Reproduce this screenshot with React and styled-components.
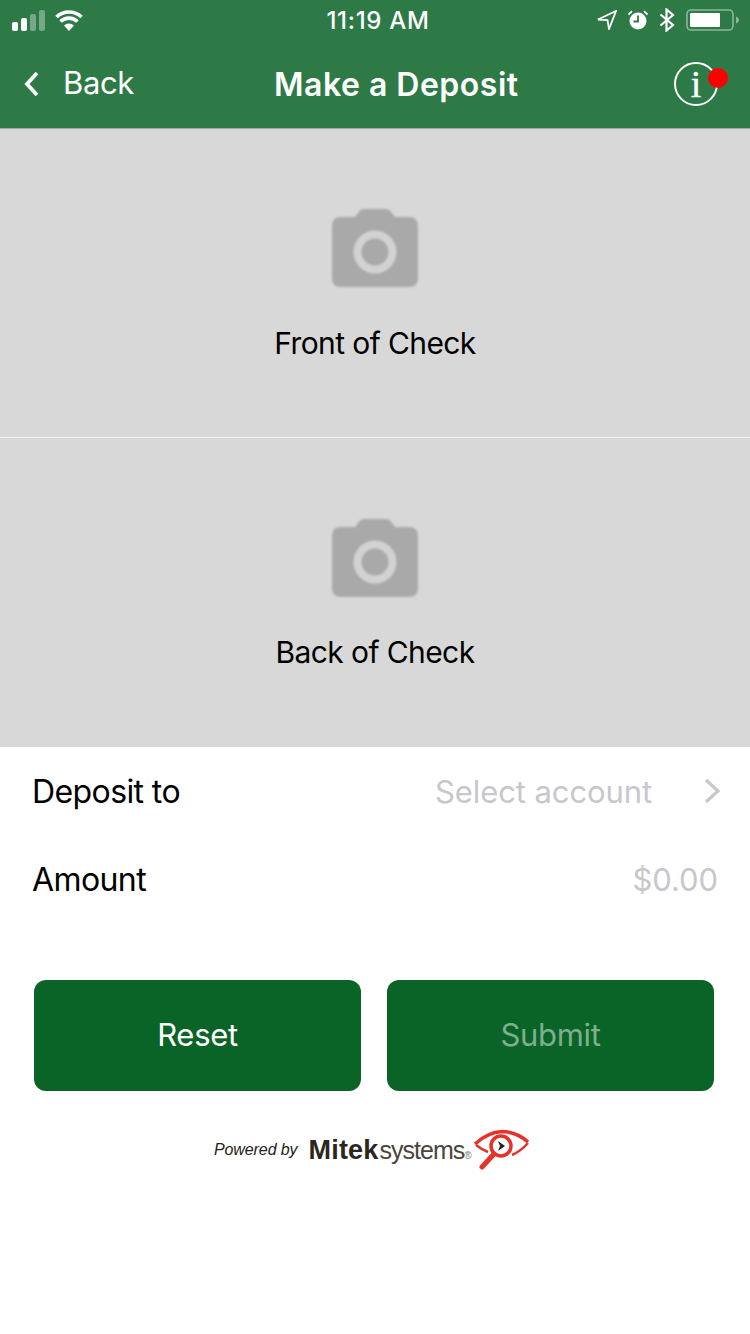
import styled, { createGlobalStyle } from "styled-components";

const Global = createGlobalStyle`
  html, body {
    margin: 0;
    padding: 0;
    background: #fff;
    font-family: "Inter", "Liberation Sans", sans-serif;
  }
`;

export default function App() {
  return (
    <Page>
      <Global />
      <Header>
        <StatusBar>
          <StatusLeft>
            <Signal />
            <Wifi />
          </StatusLeft>
          <Clock>11:19 AM</Clock>
          <StatusRight>
            <LocationArrow />
            <Alarm />
            <Bluetooth />
            <Battery />
          </StatusRight>
        </StatusBar>
        <NavBar>
          <BackLink>
            <svg width="18" height="28" viewBox="0 0 18 28">
              <path d="M15 3 L5 14 L15 25" fill="none" stroke="#fff" strokeWidth="3.8" />
            </svg>
            <span>Back</span>
          </BackLink>
          <Title>Make a Deposit</Title>
          <InfoButton>
            <InfoGlyph>i</InfoGlyph>
            <RedDot />
          </InfoButton>
        </NavBar>
      </Header>

      <CheckPanel $height={308} $top={79} $gap={35}>
        <CameraIcon />
        <CheckLabel>Front of Check</CheckLabel>
      </CheckPanel>
      <Divider />
      <CheckPanel $height={309} $top={80} $gap={34}>
        <CameraIcon />
        <CheckLabel>Back of Check</CheckLabel>
      </CheckPanel>

      <Form>
        <Row>
          <RowLabel>Deposit to</RowLabel>
          <Placeholder>
            Select account
            <svg width="20" height="28" viewBox="0 0 20 28">
              <path d="M4 3 L16 14 L4 25" fill="none" stroke="#c7c7cc" strokeWidth="3.2" />
            </svg>
          </Placeholder>
        </Row>
        <Row>
          <RowLabel>Amount</RowLabel>
          <Placeholder>$0.00</Placeholder>
        </Row>
      </Form>

      <Buttons>
        <ActionButton>Reset</ActionButton>
        <ActionButton $disabled>Submit</ActionButton>
      </Buttons>

      <Powered>
        <PoweredBy>Powered by</PoweredBy>
        <Brand>
          <b>Mitek</b>
          <span>systems</span>
          <i>®</i>
        </Brand>
        <MitekEye />
      </Powered>
    </Page>
  );
}

function Signal() {
  return (
    <svg width="34" height="22" viewBox="0 0 34 22">
      <rect x="0" y="12" width="6" height="9" rx="2" fill="#fff" />
      <rect x="9" y="8" width="6" height="13" rx="2" fill="#fff" />
      <rect x="18" y="4" width="6" height="17" rx="2" fill="#fff" opacity="0.35" />
      <rect x="27" y="0" width="6" height="21" rx="2" fill="#fff" opacity="0.35" />
    </svg>
  );
}

function Wifi() {
  return (
    <svg width="28" height="22" viewBox="0 0 28 22">
      <path d="M14 21 L9 15.5 A7.5 7.5 0 0 1 19 15.5 Z" fill="#fff" />
      <path d="M5.5 11.5 A12.5 12.5 0 0 1 22.5 11.5" fill="none" stroke="#fff" strokeWidth="3.6" />
      <path d="M1.5 7 A18 18 0 0 1 26.5 7" fill="none" stroke="#fff" strokeWidth="3.6" />
    </svg>
  );
}

function LocationArrow() {
  return (
    <svg width="20" height="20" viewBox="0 0 20 20">
      <path d="M1 9.5 L19 1 L12 19 L10.5 10 Z" fill="none" stroke="#fff" strokeWidth="1.8" strokeLinejoin="miter" />
    </svg>
  );
}

function Alarm() {
  return (
    <svg width="20" height="20" viewBox="0 0 20 20">
      <circle cx="10" cy="11" r="8.5" fill="#fff" />
      <path d="M10 5.5 V11.5 H5.5" fill="none" stroke="#2d7a47" strokeWidth="1.8" />
      <path d="M0.5 4.5 L4 1.2 M19.5 4.5 L16 1.2" stroke="#fff" strokeWidth="1.8" />
    </svg>
  );
}

function Bluetooth() {
  return (
    <svg width="16" height="24" viewBox="0 0 16 24">
      <path d="M1.5 6.5 L14 17 L7.5 22.5 V1.5 L14 7 L1.5 17.5" fill="none" stroke="#fff" strokeWidth="2.2" />
    </svg>
  );
}

function Battery() {
  return (
    <svg width="54" height="24" viewBox="0 0 54 24">
      <rect x="1" y="2" width="46" height="20" rx="4" fill="none" stroke="#fff" strokeOpacity="0.45" strokeWidth="1.6" />
      <rect x="4" y="5" width="30" height="14" rx="1" fill="#fff" />
      <path d="M50 8.5 C52 9.5 53 10.5 53 12 C53 13.5 52 14.5 50 15.5 Z" fill="#fff" fillOpacity="0.45" />
    </svg>
  );
}

function CameraIcon() {
  return (
    <CameraSvg width="88" height="80" viewBox="0 0 88 80">
      <path
        d="M10 9 H24 L29 2.5 Q31 1 33 1 H55 Q57 1 59 2.5 L64 9 H78 Q87 9 87 18 V70 Q87 79 78 79 H10 Q1 79 1 70 V18 Q1 9 10 9 Z"
        fill="#a9a9a9"
      />
      <circle cx="44" cy="44" r="17.5" fill="none" stroke="#d2d2d2" strokeWidth="8" />
    </CameraSvg>
  );
}

function MitekEye() {
  return (
    <EyeSvg width="57" height="41" viewBox="0 0 57 41">
      <path d="M2 15 Q15 3 29 2.5 Q44 3 55 13" fill="none" stroke="#e5322b" strokeWidth="3.5" />
      <path d="M55 14 Q48 22 39 26" fill="none" stroke="#e5322b" strokeWidth="2.5" />
      <path d="M3 16 Q8 20 15 23" fill="none" stroke="#e5322b" strokeWidth="2.5" />
      <circle cx="28" cy="17" r="10" fill="#fff" stroke="#e5322b" strokeWidth="3.5" />
      <path d="M25 12 L32 17 L25 22 L27 17 Z" fill="#222" />
      <path d="M21 25 L9 38" stroke="#e5322b" strokeWidth="5" strokeLinecap="round" />
    </EyeSvg>
  );
}

// styles
const Page = styled.div`
  width: 750px;
  height: 1334px;
  background: #fff;
  overflow: hidden;
`;
const Header = styled.header`
  box-sizing: border-box;
  background: #2d7a47;
  color: #fff;
  border-bottom: 1px solid #a6a6a6;
  height: 129px;
`;
const StatusBar = styled.div`
  height: 40px;
  display: grid;
  grid-template-columns: 1fr auto 1fr;
  align-items: center;
  padding: 0 10px 0 12px;
`;
const StatusLeft = styled.div`
  display: flex;
  align-items: center;
  gap: 9px;
  margin-top: 2px;
`;
const Clock = styled.div`
  font-size: 24px;
  font-weight: 500;
  letter-spacing: 0.7px;
  margin-left: 4px;
`;
const StatusRight = styled.div`
  display: flex;
  justify-content: flex-end;
  align-items: center;
  gap: 11px;
`;
const NavBar = styled.div`
  height: 88px;
  display: flex;
  align-items: center;
  position: relative;
`;
const BackLink = styled.div`
  display: flex;
  align-items: center;
  gap: 23px;
  margin-left: 22px;
  font-size: 31px;
  letter-spacing: -0.4px;
  span {
    margin-bottom: 4px;
  }
`;
const Title = styled.h1`
  margin: 0;
  position: absolute;
  left: 274px;
  font-size: 32px;
  font-weight: 600;
  letter-spacing: 0.5px;
`;
const InfoButton = styled.div`
  position: absolute;
  left: 674px;
  top: 22px;
  width: 44px;
  height: 44px;
  box-sizing: border-box;
  border: 2px solid #fff;
  border-radius: 50%;
  display: flex;
  align-items: center;
  justify-content: center;
`;
const InfoGlyph = styled.span`
  font-family: "Liberation Serif", serif;
  font-size: 38px;
  line-height: 1;
  margin-top: -1px;
  -webkit-text-stroke: 0.4px #fff;
`;
const RedDot = styled.span`
  position: absolute;
  left: 32px;
  top: 4px;
  width: 20px;
  height: 20px;
  border-radius: 50%;
  background: #fe0000;
`;
const CheckPanel = styled.section`
  height: ${(props) => props.$height}px;
  background: #d8d8d8;
  display: flex;
  flex-direction: column;
  align-items: center;
  gap: ${(props) => props.$gap}px;
  padding-top: ${(props) => props.$top}px;
  box-sizing: border-box;
`;
const CameraSvg = styled.svg`
  display: block;
  filter: blur(0.8px);
`;
const CheckLabel = styled.div`
  font-size: 30px;
  line-height: 40px;
  color: #000;
  letter-spacing: -0.6px;
`;
const Divider = styled.div`
  height: 1px;
  background: #f2f2f2;
`;
const Form = styled.div`
  padding: 0 32px 0 33px;
  height: 233px;
  box-sizing: border-box;
`;
const Row = styled.div`
  height: 88px;
  display: flex;
  align-items: center;
  justify-content: space-between;
`;
const RowLabel = styled.div`
  font-size: 32px;
  color: #000;
  letter-spacing: -0.6px;
  margin-left: -1px;
`;
const Placeholder = styled.div`
  display: flex;
  align-items: center;
  gap: 50px;
  font-size: 31px;
  color: #c7c7cc;
  letter-spacing: -0.1px;
  svg {
    margin-right: -4px;
  }
`;
const Buttons = styled.div`
  display: flex;
  gap: 26px;
  padding-left: 34px;
`;
const ActionButton = styled.div`
  width: 327px;
  height: 109px;
  padding-bottom: 2px;
  border-radius: 12px;
  background: #0a6427;
  color: ${(props) => (props.$disabled ? "#7fae8e" : "#fff")};
  font-size: 31px;
  letter-spacing: -0.3px;
  display: flex;
  align-items: center;
  justify-content: center;
`;
const Powered = styled.div`
  margin-top: 37px;
  display: flex;
  align-items: center;
  padding-left: 214px;
  height: 44px;
`;
const PoweredBy = styled.span`
  font-family: "Liberation Sans", sans-serif;
  font-style: italic;
  font-size: 16px;
  color: #222;
  letter-spacing: -0.1px;
  margin-right: 11px;
`;
const Brand = styled.div`
  display: flex;
  align-items: baseline;
  font-family: "Liberation Sans", sans-serif;
  color: #2b2620;
  margin-right: 1px;
  b {
    font-size: 27px;
    letter-spacing: 0.2px;
  }
  span {
    font-size: 25px;
    letter-spacing: -1px;
    color: #4a443e;
    margin-left: 1px;
  }
  i {
    font-size: 10px;
    font-style: normal;
    color: #777;
  }
`;
const EyeSvg = styled.svg`
  display: block;
  margin-top: -2px;
`;
